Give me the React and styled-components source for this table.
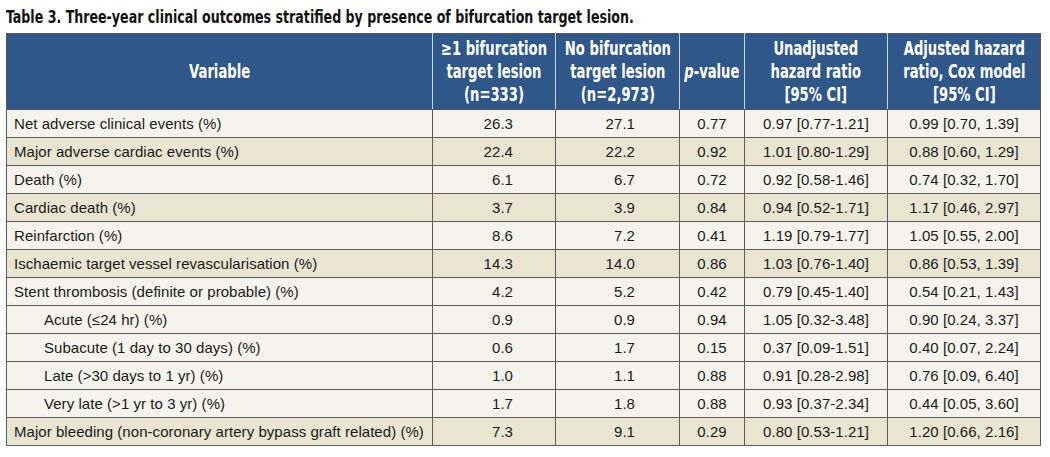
import React from "react";
import styled, { createGlobalStyle } from "styled-components";

const GlobalStyle = createGlobalStyle`
  html, body {
    margin: 0;
    padding: 0;
    background: #ffffff;
  }
`;

const Page = styled.div`
  padding: 6px 0 0 6px;
  width: 1034px;
`;

const Title = styled.h1`
  margin: 0 0 6px 0;
  font-family: "DejaVu Sans Condensed", "Liberation Sans", sans-serif;
  font-weight: bold;
  font-size: 18px;
  line-height: 21px;
  color: #111;
  white-space: nowrap;
`;

// narrow the condensed face down to the width of the printed headline font
const Squeeze = styled.span`
  display: inline-block;
  flex-shrink: 0;
  white-space: nowrap;
  transform: scaleX(${(p) => p.$sx});
  transform-origin: ${(p) => p.$origin || "center"} center;
`;

const Table = styled.table`
  border-collapse: collapse;
  table-layout: fixed;
  width: 1034px;
  border: 1px solid #555;
`;

const HeadCell = styled.th`
  background: #30578a;
  color: #ffffff;
  font-family: "DejaVu Sans Condensed", "Liberation Sans", sans-serif;
  font-weight: bold;
  font-size: 19px;
  line-height: 23px;
  height: 75px;
  padding: 0;
  vertical-align: middle;
  border-left: 1px solid #c9d3e2;
  border-bottom: 1px solid #555;
  &:first-child {
    border-left: 1px solid #555;
  }
`;

const HeadInner = styled.div`
  display: flex;
  justify-content: center;
  text-align: center;
`;

const Row = styled.tr`
  background: ${(p) => (p.$tan ? "#e8e5d1" : "#f5f4ec")};
`;

const Cell = styled.td`
  height: 27px;
  padding: 0 ${(p) => (p.$right ? `${p.$right}px` : "4px")} 0 4px;
  font-family: "Liberation Sans", Arial, sans-serif;
  font-size: 15px;
  letter-spacing: 0.05px;
  line-height: 27px;
  color: #1a1a1a;
  text-align: ${(p) => (p.$right ? "right" : "center")};
  border: 1px solid #5a5a5a;
  white-space: nowrap;
`;

const VarCell = styled(Cell)`
  text-align: left;
  padding-left: ${(p) => (p.$indent ? "37px" : "7px")};
`;

const headers = [
  ["Variable"],
  ["≥1 bifurcation", "target lesion", "(n=333)"],
  ["No bifurcation", "target lesion", "(n=2,973)"],
  [<><i>p</i>-value</>],
  ["Unadjusted", "hazard ratio", "[95% CI]"],
  ["Adjusted hazard", "ratio, Cox model", "[95% CI]"],
];

const rows = [
  ["Net adverse clinical events (%)", "26.3", "27.1", "0.77", "0.97 [0.77-1.21]", "0.99 [0.70, 1.39]", false, false],
  ["Major adverse cardiac events (%)", "22.4", "22.2", "0.92", "1.01 [0.80-1.29]", "0.88 [0.60, 1.29]", true, false],
  ["Death (%)", "6.1", "6.7", "0.72", "0.92 [0.58-1.46]", "0.74 [0.32, 1.70]", false, false],
  ["Cardiac death (%)", "3.7", "3.9", "0.84", "0.94 [0.52-1.71]", "1.17 [0.46, 2.97]", true, false],
  ["Reinfarction (%)", "8.6", "7.2", "0.41", "1.19 [0.79-1.77]", "1.05 [0.55, 2.00]", false, false],
  ["Ischaemic target vessel revascularisation (%)", "14.3", "14.0", "0.86", "1.03 [0.76-1.40]", "0.86 [0.53, 1.39]", true, false],
  ["Stent thrombosis (definite or probable) (%)", "4.2", "5.2", "0.42", "0.79 [0.45-1.40]", "0.54 [0.21, 1.43]", false, false],
  ["Acute (≤24 hr) (%)", "0.9", "0.9", "0.94", "1.05 [0.32-3.48]", "0.90 [0.24, 3.37]", false, true],
  ["Subacute (1 day to 30 days) (%)", "0.6", "1.7", "0.15", "0.37 [0.09-1.51]", "0.40 [0.07, 2.24]", false, true],
  ["Late (>30 days to 1 yr) (%)", "1.0", "1.1", "0.88", "0.91 [0.28-2.98]", "0.76 [0.09, 6.40]", false, true],
  ["Very late (>1 yr to 3 yr) (%)", "1.7", "1.8", "0.88", "0.93 [0.37-2.34]", "0.44 [0.05, 3.60]", false, true],
  ["Major bleeding (non-coronary artery bypass graft related) (%)", "7.3", "9.1", "0.29", "0.80 [0.53-1.21]", "1.20 [0.66, 2.16]", true, false],
];

const App = () => {
  return (
    <>
      <GlobalStyle />
      <Page>
        <Title>
          <Squeeze $sx={0.78} $origin="left">
            Table 3. Three-year clinical outcomes stratified by presence of bifurcation target lesion.
          </Squeeze>
        </Title>
        <Table>
          <colgroup>
            <col style={{ width: "426px" }} />
            <col style={{ width: "123px" }} />
            <col style={{ width: "124px" }} />
            <col style={{ width: "65px" }} />
            <col style={{ width: "143px" }} />
            <col style={{ width: "153px" }} />
          </colgroup>
          <thead>
            <tr>
              {headers.map((lines, i) => (
                <HeadCell key={i}>
                  <HeadInner>
                    <Squeeze $sx={0.77}>
                      {lines.map((l, j) => (
                        <React.Fragment key={j}>
                          {j > 0 && <br />}
                          {l}
                        </React.Fragment>
                      ))}
                    </Squeeze>
                  </HeadInner>
                </HeadCell>
              ))}
            </tr>
          </thead>
          <tbody>
            {rows.map((r) => (
              <Row key={r[0]} $tan={r[6]}>
                <VarCell $indent={r[7]}>{r[0]}</VarCell>
                <Cell $right={42}>{r[1]}</Cell>
                <Cell $right={44}>{r[2]}</Cell>
                <Cell>{r[3]}</Cell>
                <Cell>{r[4]}</Cell>
                <Cell>{r[5]}</Cell>
              </Row>
            ))}
          </tbody>
        </Table>
      </Page>
    </>
  );
};

export default App;
